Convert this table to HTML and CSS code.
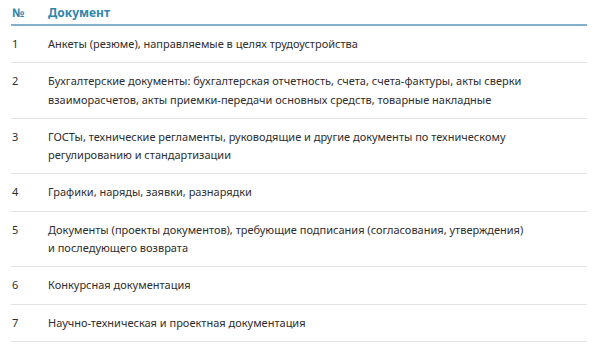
FILE: index.html
```html
<!DOCTYPE html>
<html lang="ru">
<head>
<meta charset="utf-8">
<link rel="stylesheet" href="styles.css">
</head>
<body>
<table class="docs">
  <thead>
    <tr><th class="num">№</th><th class="text">Документ</th></tr>
  </thead>
  <tbody>
    <tr><td class="num">1</td><td class="text">Анкеты (резюме), направляемые в целях трудоустройства</td></tr>
    <tr><td class="num">2</td><td class="text">Бухгалтерские документы: бухгалтерская отчетность, счета, счета-фактуры, акты сверки взаиморасчетов, акты приемки-передачи основных средств, товарные накладные</td></tr>
    <tr><td class="num">3</td><td class="text">ГОСТы, технические регламенты, руководящие и другие документы по техническому регулированию и стандартизации</td></tr>
    <tr><td class="num">4</td><td class="text">Графики, наряды, заявки, разнарядки</td></tr>
    <tr><td class="num">5</td><td class="text">Документы (проекты документов), требующие подписания (согласования, утверждения) и последующего возврата</td></tr>
    <tr><td class="num">6</td><td class="text">Конкурсная документация</td></tr>
    <tr><td class="num">7</td><td class="text">Научно-техническая и проектная документация</td></tr>
  </tbody>
</table>
</body>
</html>
```

FILE: styles.css
```css
html, body {
  margin: 0;
  padding: 0;
  background: #fff;
}
body {
  padding: 0 12px 0 11px;
  font-family: "Noto Sans", "Open Sans", sans-serif;
  font-size: 11px;
  color: #2e2e2e;
}
.docs {
  width: 576px;
  border-collapse: collapse;
}
.docs th {
  text-align: left;
  color: #2f87ad;
  font-weight: bold;
  font-size: 12px;
  line-height: 18px;
  padding: 4px 0 2px 0;
  border-bottom: 2px solid #84b0cc;
}
.docs td {
  line-height: 18.3px;
  padding: 9px 0 9px 0;
  vertical-align: top;
  border-bottom: 1px solid #e3e3e3;
}
.docs .num {
  width: 36px;
  padding-left: 1px;
}
.docs .text {
  padding-right: 60px;
}
```
